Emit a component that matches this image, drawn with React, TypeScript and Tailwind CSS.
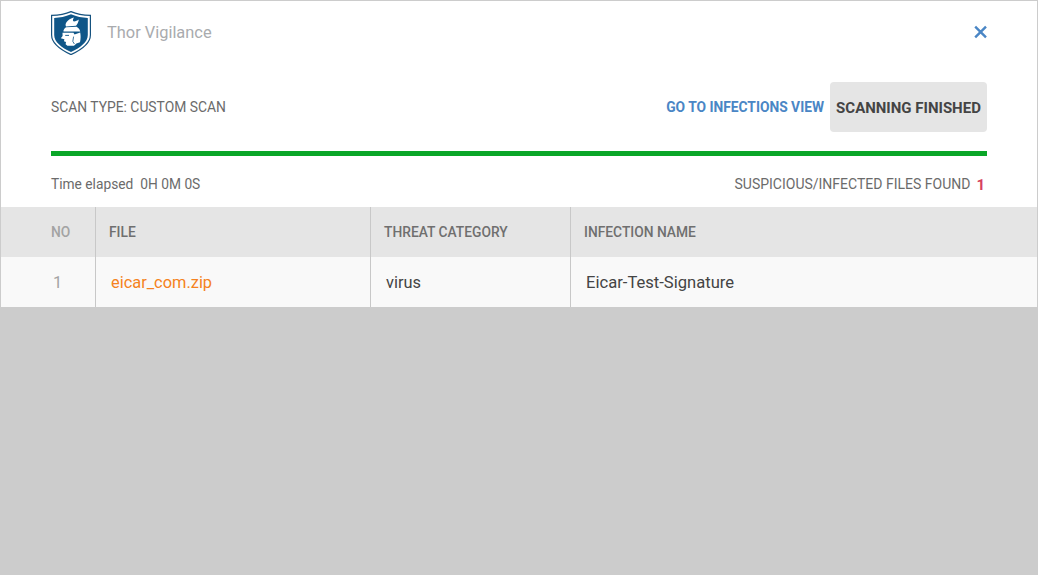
function Logo() {
  return (
    <svg width="40" height="44" viewBox="0 0 40 44">
      <path d="M20 0.6C26 3.2 32 4.2 39.4 4.4V24C39.4 32 31 38.5 20 43.6C9 38.5 0.6 32 0.6 24V4.4C8 4.2 14 3.2 20 0.6Z" fill="#fff" stroke="#15527f" strokeWidth="1.2" />
      <path d="M20 3.2C25.8 5.6 31 6.6 36.8 6.9V24C36.8 30.8 29.8 36.5 20 41C10.2 36.5 3.2 30.8 3.2 24V6.9C9 6.6 14.2 5.6 20 3.2Z" fill="#0f5688" />
      {/* wing */}
      <path d="M14.5 14C15 10.5 18 8 23 6.5C21.5 8.5 21.5 10 23 10.5C24.8 10.3 26.4 9.5 27.8 8.5C27.5 11 26.4 13.2 25 14.8L15 15.5Z" fill="#fff" />
      {/* helmet */}
      <path d="M12.5 19.5C13 18 14 16.8 15.2 16.2L25.6 15.8C27.6 17 28.8 18.6 29.2 20.4L12.5 20.6Z" fill="#fff" />
      {/* face, beard and back of the head */}
      <path d="M11.5 21.8H22.5L23.5 23.6L29.2 21.6C29.8 24.8 29.8 28 29 31.2L25.4 32.4L23 34.8H16.4L14.6 33.2L15 31L13 30.2L13.4 28.2L9.8 27.2L11.6 25Z" fill="#fff" />
      <path d="M14.2 24.4H18" stroke="#0f5688" strokeWidth="0.9" />
      <path d="M22.6 25.6L21.8 30.4L23.4 33" stroke="#0f5688" strokeWidth="0.8" fill="none" />
    </svg>
  );
}

function CloseIcon() {
  return (
    <svg width="14" height="14" viewBox="0 0 14 14" className="mb-[2px] text-[#4a86c5]">
      <path d="M2.2 1.6L13 12.4M13 1.6L2.2 12.4" stroke="currentColor" strokeWidth="2.4" />
    </svg>
  );
}

export default function App() {
  return (
    <div className="flex h-[575px] w-[1038px] flex-col overflow-hidden bg-[#cccccc] font-['Roboto',sans-serif]">
      <div className="border-x border-t border-[#cccccc] bg-white">
        <div className="flex h-[206px] flex-col px-[50px]">
          <div className="flex h-[62px] items-center justify-between pt-px">
            <div className="flex items-center gap-4">
              <Logo />
              <span className="pt-[2px] text-[16.4px] text-[#a9abae]">Thor Vigilance</span>
            </div>
            <CloseIcon />
          </div>
          <div className="mt-[19px] flex h-[50px] items-center justify-between">
            <span className="pt-px text-[13.85px] text-[#6b6b6b]">SCAN TYPE: CUSTOM SCAN</span>
            <div className="flex items-center gap-1.5">
              <span className="pt-px text-[13.8px] font-bold text-[#4a86c5]">GO TO INFECTIONS VIEW</span>
              <span className="flex h-[50px] w-[157px] items-center justify-center rounded bg-[#e5e5e5] pt-[2px] text-[15px] font-bold text-[#444444]">
                SCANNING FINISHED
              </span>
            </div>
          </div>
          <div className="mt-[19px] h-[5px] bg-[#0aa628]" />
          <div className="mt-[18px] flex items-center justify-between text-[14px] leading-[18px] text-[#6b6b6b]">
            <span className="text-[13.75px]">
              Time elapsed<span className="ml-[7px]">0H 0M 0S</span>
            </span>
            <span className="flex items-center gap-[6px] pr-[2px]">
              SUSPICIOUS/INFECTED FILES FOUND
              <span className="pt-[2px] text-[15px] font-bold text-[#d6415f]">1</span>
            </span>
          </div>
        </div>
        <div className="flex h-[50px] bg-[#e5e5e5] text-[13.8px] font-medium text-[#6f6f6f]">
          <div className="flex w-[95px] items-center border-r border-[#c8c8c8] pt-px pl-[50px] text-[#a3a3a3]">NO</div>
          <div className="flex w-[275px] items-center border-r border-[#c8c8c8] pt-px pl-[13px]">FILE</div>
          <div className="flex w-[200px] items-center border-r border-[#c8c8c8] pt-px pl-[13px]">THREAT CATEGORY</div>
          <div className="flex flex-1 items-center pt-px pl-[13px]">INFECTION NAME</div>
        </div>
        <div className="flex h-[50px] bg-[#f9f9f9] text-[16.4px] text-[#444444]">
          <div className="flex w-[95px] items-center border-r border-[#c8c8c8] pt-[2px] pl-[52px] text-[#a3a3a3]">1</div>
          <div className="flex w-[275px] items-center border-r border-[#c8c8c8] pt-[2px] pl-[15px] text-[#f58220]">eicar_com.zip</div>
          <div className="flex w-[200px] items-center border-r border-[#c8c8c8] pt-[2px] pl-[15px]">virus</div>
          <div className="flex flex-1 items-center pt-[2px] pl-[15px] text-[16.6px]">Eicar-Test-Signature</div>
        </div>
      </div>
    </div>
  );
}
